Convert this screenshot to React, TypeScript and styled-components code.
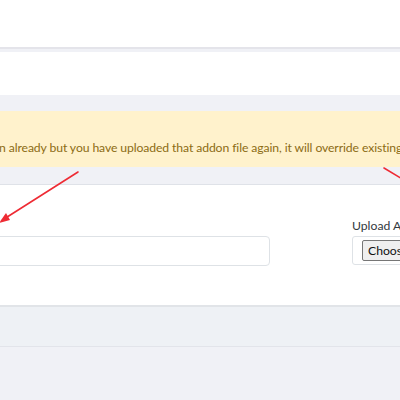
import React from "react";
import styled, { createGlobalStyle } from "styled-components";

const GlobalStyle = createGlobalStyle`
	html, body {
		margin: 0;
		padding: 0;
		background: #f0f1f6;
		overflow: hidden;
	}
	body {
		font-family: Lato, "Liberation Sans", sans-serif;
	}
`;

const Page = styled.div`
	position: relative;
	width: 400px;
	height: 400px;
	overflow: hidden;
	background: #f0f1f6;
`;

const Header = styled.div`
	height: 47px;
	background: #ffffff;
	border-bottom: 2px solid #e4e4ea;
`;

const TitleBar = styled.div`
	margin-top: 3px;
	height: 43px;
	background: #ffffff;
`;

const Gap = styled.div<{ h: number }>`
	height: ${(p) => p.h}px;
`;

const Alert = styled.div`
	height: 56px;
	background: #fff2cc;
	color: #8c6c14;
	font-size: 12.2px;
	letter-spacing: -0.1px;
	display: flex;
	align-items: center;
	padding-top: 17px;
	box-sizing: border-box;
	white-space: nowrap;
	overflow: hidden;
`;

const AlertText = styled.span`
	margin-left: -1px;
`;

const Card = styled.div`
	background: #ffffff;
	border-top: 1px solid #dfe2e8;
	border-bottom: 1px solid #e2e4ea;
`;

const CardBody = styled.div`
	height: 120px;
	display: grid;
	grid-template-columns: 290px 1fr;
	column-gap: 82px;
	margin-left: -20px;
	padding-top: 31px;
	box-sizing: border-box;
`;

const Field = styled.div`
	display: flex;
	flex-direction: column;
	gap: 1px;
	white-space: nowrap;
`;

const Label = styled.label`
	font-size: 12.2px;
	color: #333a40;
	height: 19px;
	line-height: 19px;
`;

const TextInput = styled.div`
	height: 28px;
	border: 1px solid #dee2e6;
	border-radius: 4px;
	background: #fff;
`;

const FileBox = styled.div`
	height: 27px;
	border: 1px solid #dee2e6;
	border-radius: 3px;
	display: flex;
	align-items: center;
	padding-left: 9px;
	gap: 6px;
	font-size: 12.2px;
	color: #222;
`;

const FileButton = styled.span`
	height: 19px;
	line-height: 19px;
	padding: 0 5px;
	background: #efefef;
	border: 1px solid #767676;
	border-radius: 2px;
	font-size: 12.2px;
	color: #111;
`;

const CardFooter = styled.div`
	height: 39px;
	background: #eef1f5;
	border-top: 2px solid #e1e4e8;
`;

const Arrows = styled.svg`
	position: absolute;
	left: 0;
	top: 0;
	pointer-events: none;
`;

export default function App() {
	return (
		<Page>
			<GlobalStyle />
			<Header />
			<TitleBar />
			<Gap h={16} />
			<Alert>
				<AlertText>
					n already but you have uploaded that addon file again, it will
					override existing files.
				</AlertText>
			</Alert>
			<Gap h={17} />
			<Card>
				<CardBody>
					<Field>
						<Label />
						<TextInput />
					</Field>
					<Field>
						<Label>Upload Addon File</Label>
						<FileBox>
							<FileButton>Choose File</FileButton>
							<span>No file chosen</span>
						</FileBox>
					</Field>
				</CardBody>
				<CardFooter />
			</Card>
			<Arrows width="400" height="400" viewBox="0 0 400 400">
				<g stroke="#ee2b34" strokeWidth="1.6" fill="#ee2b34" strokeLinecap="round">
					<line x1="78" y1="172" x2="4" y2="219" />
					<polygon points="-1,223 6,213 10,220" stroke="none" />
					<line x1="384" y1="168" x2="404" y2="180" />
				</g>
			</Arrows>
		</Page>
	);
}
